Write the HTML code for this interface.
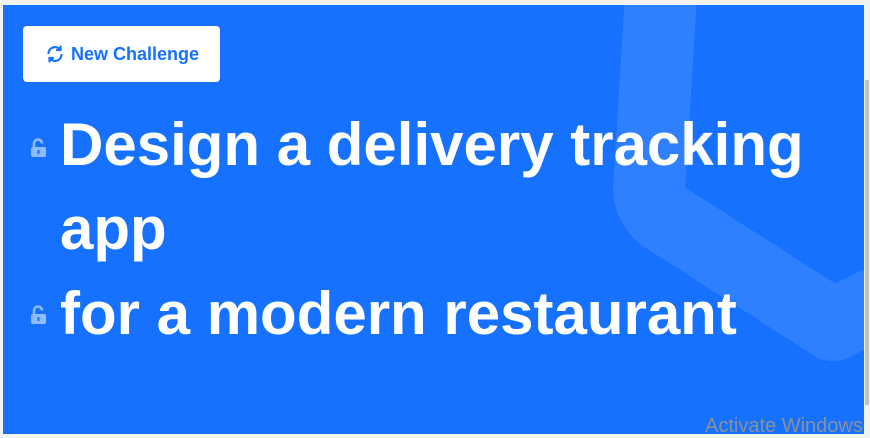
<!DOCTYPE html>
<html><head><style>
html,body{margin:0;padding:0;width:870px;height:437px;overflow:hidden;background:#f2f2f2;font-family:"Liberation Sans",Arial,sans-serif}
#p{position:absolute;left:3px;top:5px;width:861px;height:429px;background:#1672fe;overflow:hidden}
#sb{position:absolute;left:865px;top:80px;width:4px;height:325px;background:#c1c1c1}
#btn{position:absolute;left:20px;top:21px;width:197px;height:56px;background:#fff;border-radius:4px;color:#1672fe;font-weight:bold;font-size:18px;line-height:56px}
#btn svg{position:absolute;left:23px;top:19px}
#btn span{position:absolute;left:48px;top:0}
.t{position:absolute;left:57px;color:#fff;font-weight:bold;font-size:60px;white-space:nowrap;line-height:1}
.lk{position:absolute;left:27px}
#aw{position:absolute;left:705px;top:415px;color:#8a9099;font-size:20px;white-space:nowrap}
</style></head><body>
<div id="p">
<svg width="861" height="429" style="position:absolute;left:0;top:0">
<path d="M658 -10 L646 185 Q648 205 666 215 L830 320 L880 295" fill="none" stroke="#2f80ff" stroke-width="72" stroke-linejoin="round"/>
</svg>
<div id="btn"><svg width="18" height="18" viewBox="0 0 18 18" fill="none" stroke="#1672fe" stroke-width="2.2" stroke-linecap="round"><path d="M2.5 8 A6.5 6.5 0 0 1 14 4.5"/><path d="M15.5 10 A6.5 6.5 0 0 1 4 13.5"/><path d="M14.5 1.5 V5 H11" /><path d="M3.5 16.5 V13 H7"/></svg><span>New Challenge</span></div>
<svg class="lk" style="top:133px" width="17" height="20" viewBox="0 0 17 20"><path d="M4 9 V5.5 A4 4 0 0 1 12 5.5" fill="none" stroke="#8fbcff" stroke-width="2.5"/><rect x="1" y="9" width="15" height="10" rx="2" fill="#8fbcff"/><rect x="7.5" y="12" width="2" height="4" fill="#1672fe"/></svg>
<svg class="lk" style="top:300px" width="17" height="20" viewBox="0 0 17 20"><path d="M4 9 V5.5 A4 4 0 0 1 12 5.5" fill="none" stroke="#8fbcff" stroke-width="2.5"/><rect x="1" y="9" width="15" height="10" rx="2" fill="#8fbcff"/><rect x="7.5" y="12" width="2" height="4" fill="#1672fe"/></svg>
<div class="t" style="top:110px">Design a delivery tracking</div>
<div class="t" style="top:194px">app</div>
<div class="t" style="top:279px">for a modern restaurant</div>
</div>
<div id="sb"></div>
<div id="aw">Activate Windows</div>
</body></html>
